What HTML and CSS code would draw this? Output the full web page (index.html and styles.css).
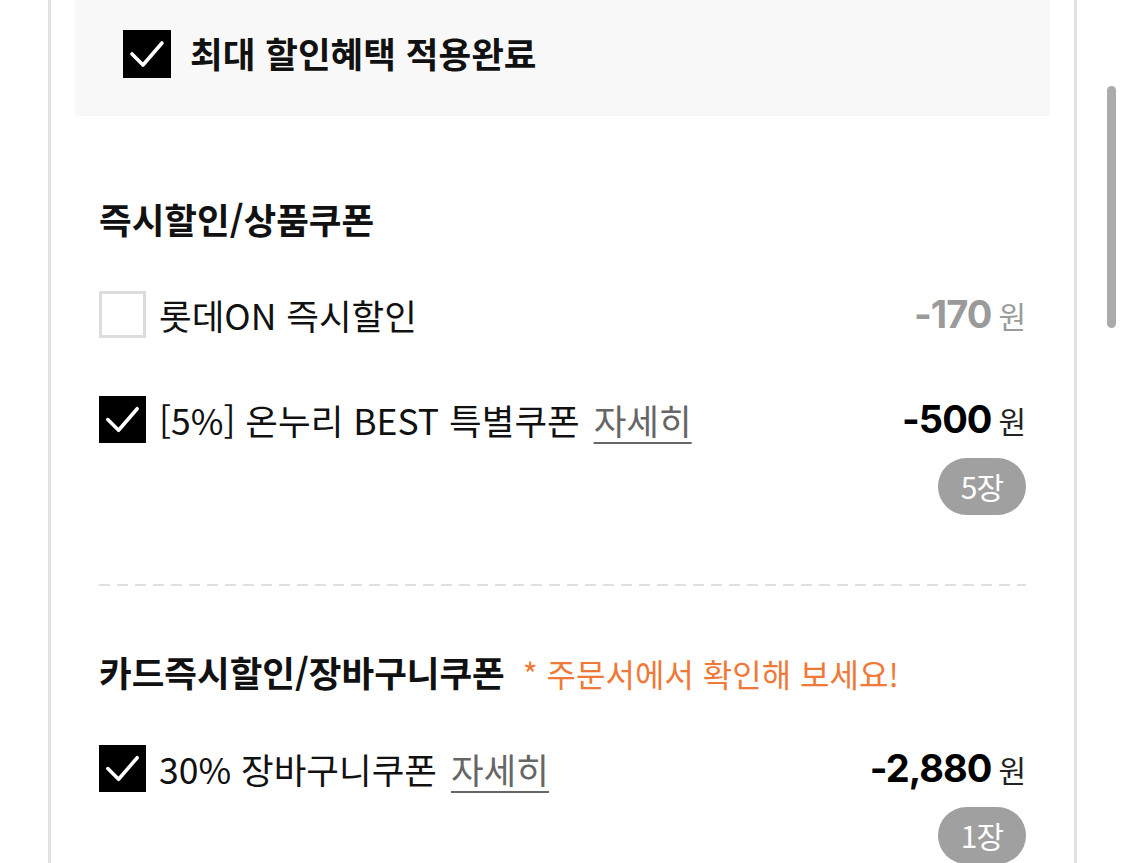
FILE: index.html
```html
<!DOCTYPE html>
<html lang="ko">
<head>
<meta charset="UTF-8">
<meta name="viewport" content="width=device-width, initial-scale=1.0">
<link rel="stylesheet" href="styles.css">
<title>할인 혜택</title>
</head>
<body>

<div class="sheet">

  <!-- 최대 할인 적용 -->
  <div class="best-box">
    <span class="chk on"><svg viewBox="0 0 48 48"><polyline points="9,24 20,35 39,13"/></svg></span>
    <strong>최대 할인혜택 적용완료</strong>
  </div>

  <!-- 즉시할인/상품쿠폰 -->
  <div class="group">
    <h2 class="group-title">즉시할인/상품쿠폰</h2>

    <div class="row">
      <span class="chk"></span>
      <span class="name">롯데ON 즉시할인</span>
      <span class="price off"><b>-170</b>원</span>
    </div>

    <div class="row">
      <span class="chk on"><svg viewBox="0 0 48 48"><polyline points="9,24 20,35 39,13"/></svg></span>
      <span class="name">[5%] 온누리 BEST 특별쿠폰 <a href="#" class="more">자세히</a></span>
      <span class="price"><b>-500</b>원</span>
    </div>
    <div class="count"><span>5장</span></div>
  </div>

  <div class="dash"></div>

  <!-- 카드즉시할인/장바구니쿠폰 -->
  <div class="group second">
    <h2 class="group-title">카드즉시할인/장바구니쿠폰 <em>* 주문서에서 확인해 보세요!</em></h2>

    <div class="row">
      <span class="chk on"><svg viewBox="0 0 48 48"><polyline points="9,24 20,35 39,13"/></svg></span>
      <span class="name">30% 장바구니쿠폰 <a href="#" class="more">자세히</a></span>
      <span class="price"><b>-2,880</b>원</span>
    </div>
    <div class="count"><span>1장</span></div>
  </div>

</div>

<div class="scroll-thumb"></div>

</body>
</html>
```

FILE: styles.css
```css
body { margin: 0; background: #fff; color: #111; font-family: "Noto Sans CJK KR", "Noto Sans", sans-serif; height: 863px; overflow: hidden; }

.sheet { margin-left: 48px; width: 975px; min-height: 863px; padding: 0 24px; border-left: 3px solid #e2e2e2; border-right: 3px solid #e2e2e2; }

.best-box { height: 116px; box-sizing: border-box; padding: 30px 48px 0; background: #f8f8f8; display: flex; align-items: flex-start; gap: 19px; }
.best-box strong { font-size: 35.5px; font-weight: 700; line-height: 46px; }

.chk { flex: none; width: 47px; height: 47px; box-sizing: border-box; border: 3px solid #dcdcdc; background: #fff; display: block; }
.chk.on { border: none; background: #000; }
.chk svg { width: 47px; height: 47px; display: block; }
.chk polyline { fill: none; stroke: #fff; stroke-width: 3.6; stroke-linecap: round; stroke-linejoin: round; }
.best-box .chk { width: 48px; height: 48px; }
.best-box .chk svg { width: 48px; height: 48px; }

.group { padding: 81px 24px 0; }
.group.second { padding-top: 64px; }
.group-title { margin: 0 0 50px; font-size: 35.5px; font-weight: 700; line-height: 44px; white-space: nowrap; }
.group-title em { font-style: normal; font-weight: 400; font-size: 32px; color: #ef7a38; margin-left: 8px; }

.row { display: flex; align-items: center; height: 47px; }
.row + .row { margin-top: 58px; }
.name { margin-left: 13px; font-size: 35.5px; line-height: 47px; white-space: nowrap; }
.more { color: #666; text-decoration: underline; text-underline-offset: 7px; text-decoration-thickness: 2px; margin-left: 4px; }

.price { margin-left: auto; font-size: 30px; line-height: 47px; white-space: nowrap; color: #222; }
.price b { font-family: Inter, "Noto Sans", sans-serif; font-size: 38px; font-weight: 700; letter-spacing: -1px; margin-right: 7px; color: #000; }
.price.off, .price.off b { color: #9a9a9a; }

.count { display: flex; justify-content: flex-end; margin-top: 15px; }
.count span { height: 57px; padding: 0 23px; border-radius: 29px; background: #a0a0a0; color: #fff; font-size: 30px; line-height: 57px; letter-spacing: -1px; }

.dash { margin: 69px 24px 0; height: 2px; background: repeating-linear-gradient(90deg, #e0e0e0 0 11px, transparent 11px 18px); }

.scroll-thumb { position: absolute; left: 1107px; top: 86px; width: 9px; height: 242px; border-radius: 5px; background: #ababab; }
```
